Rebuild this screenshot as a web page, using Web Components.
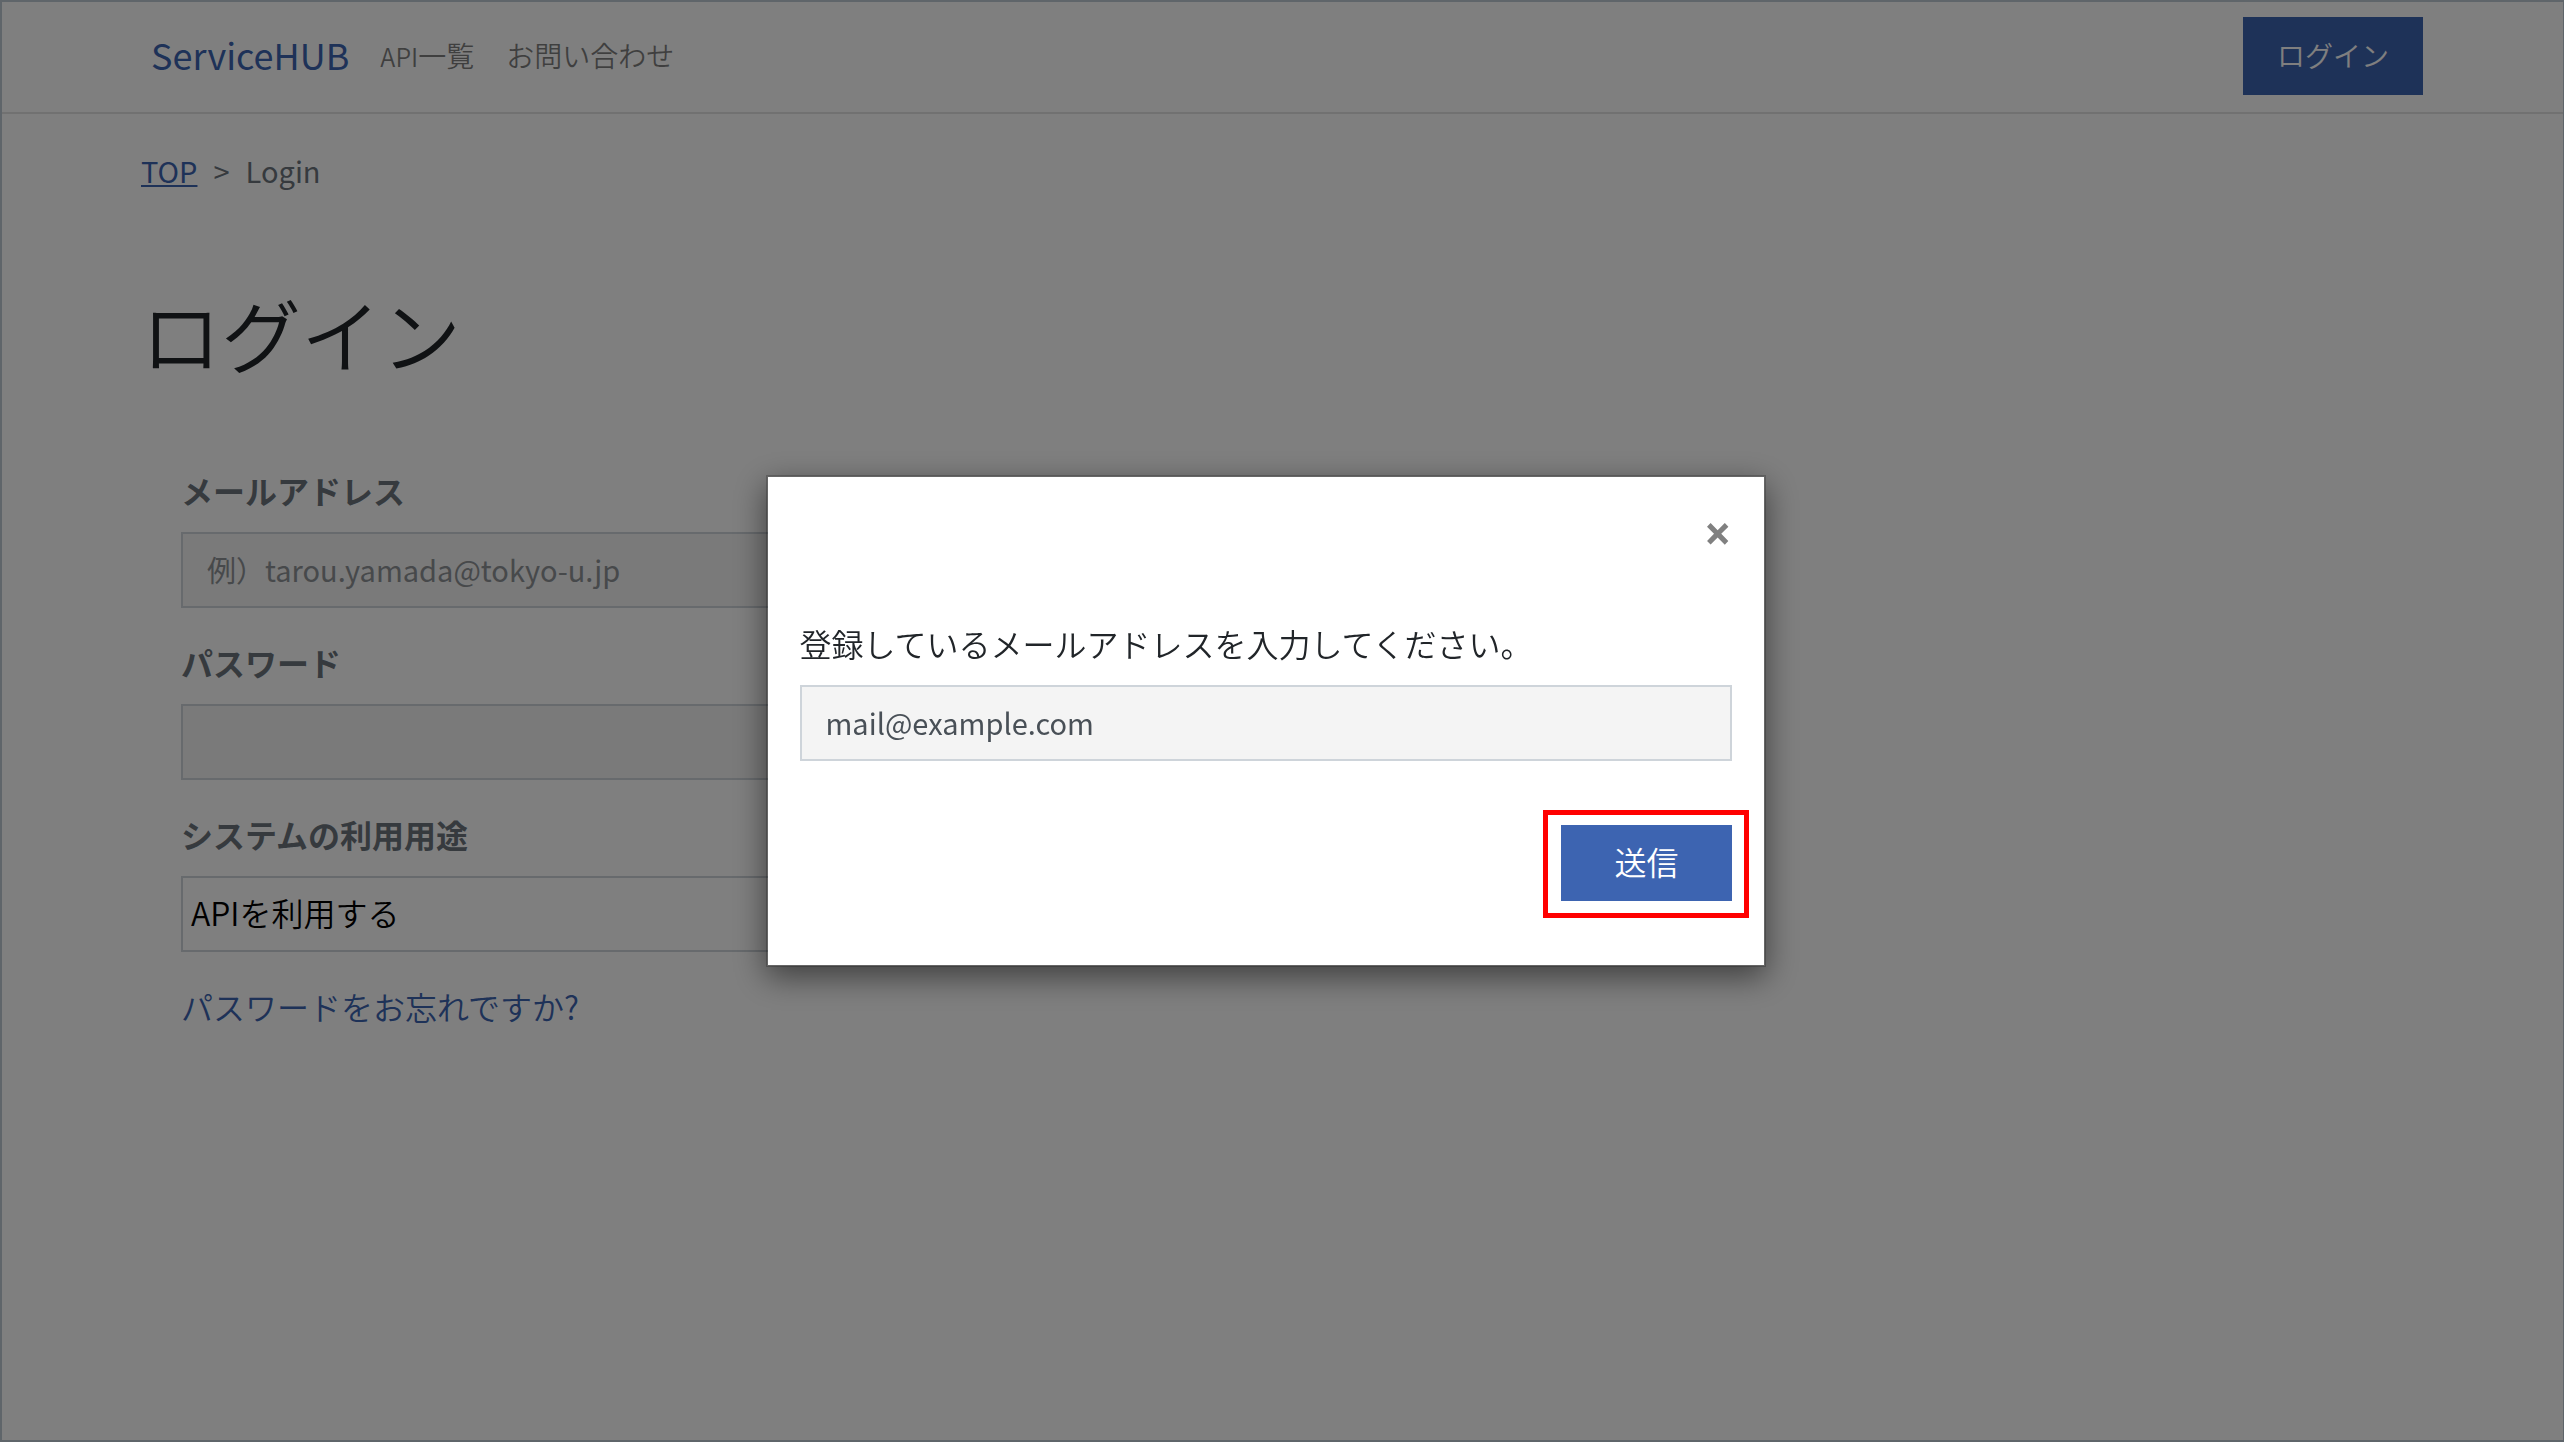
<!DOCTYPE html>
<html lang="ja">
<head>
<meta charset="utf-8">
<meta name="viewport" content="width=device-width, initial-scale=1">
<title>ServiceHUB</title>
<style>
body {
  margin: 0;
  min-height: 100vh;
  background: #fff;
  color: #212529;
  font: 32px/48px "Noto Sans CJK JP", sans-serif;
  --primary: #3d64b1;
  --muted: #6c757d;
  --line: #ced4da;
  --field: #f4f4f4;
  --thin: 350;
}
/* latin letters run large beside the kana */
.latin {
  font-size: 25px;
}
</style>
</head>
<body>
<hub-header>
  <hub-nav-link href="#apis"><span class="latin">API</span>一覧</hub-nav-link>
  <hub-nav-link href="#contact">お問い合わせ</hub-nav-link>
</hub-header>
<hub-login-view></hub-login-view>
<hub-modal>
  <hub-field label="登録しているメールアドレスを入力してください。" type="email" value="mail@example.com" plain></hub-field>
  <hub-button slot="footer" highlight>送信</hub-button>
</hub-modal>

<script>
customElements.define('hub-button', class extends HTMLElement {
  constructor() {
    super()
    this.attachShadow({mode: 'open'})
    this.shadowRoot.innerHTML = this.template
  }

  get template() {
    return `
    <style>
    :host {
      display: block;
      position: relative;
    }
    button {
      display: block;
      border: 0;
      padding: 12px 53px 16px;
      background: var(--primary);
      color: #fff;
      font: inherit;
      font-weight: var(--thin);
      cursor: pointer;
    }
    :host([small]) button {
      padding: 14px 34px 16px;
      font-size: 28px;
    }
    :host([highlight])::after {
      content: '';
      position: absolute;
      inset: -15px -17px -17px -18px;
      border: 5px solid #f00;
      pointer-events: none;
    }
    </style>
    <button type="button"><slot></slot></button>
    `
  }
})

customElements.define('hub-nav-link', class extends HTMLElement {
  constructor() {
    super()
    this.attachShadow({mode: 'open'})
    this.shadowRoot.innerHTML = `
    <style>
    :host {
      display: block;
    }
    a {
      color: rgba(0, 0, 0, .5);
      font-size: 28px;
      font-weight: var(--thin);
      text-decoration: none;
    }
    </style>
    <a href="${this.getAttribute('href')}"><slot></slot></a>
    `
  }
})

customElements.define('hub-header', class extends HTMLElement {
  constructor() {
    super()
    this.attachShadow({mode: 'open'})
    this.shadowRoot.innerHTML = this.template
  }

  get template() {
    return `
    <style>
    :host {
      display: flex;
      align-items: center;
      padding: 17px 141px 17px 151px;
      border-bottom: 2px solid #e2e2e2;
    }
    .brand {
      margin-right: 31px;
      padding-bottom: 4px;
      color: var(--primary);
      font-size: 36px;
      text-decoration: none;
    }
    nav {
      display: flex;
      flex: 1;
      gap: 32px;
      padding-bottom: 4px;
    }
    </style>
    <a class="brand" href="#top">ServiceHUB</a>
    <nav><slot></slot></nav>
    <hub-button small>ログイン</hub-button>
    `
  }
})

customElements.define('hub-field', class extends HTMLElement {
  constructor() {
    super()
    this.attachShadow({mode: 'open'})
    this.shadowRoot.innerHTML = this.template
  }

  get control() {
    const options = this.getAttribute('options')
    if (options) {
      return `<select id="control">${options.split(',').map(o => `<option>${o}</option>`).join('')}</select>`
    }
    const attr = name => this.getAttribute(name) || ''
    return `<input id="control" type="${attr('type')}" value="${attr('value')}" placeholder="${attr('placeholder')}">`
  }

  get template() {
    return `
    <style>
    :host {
      display: block;
    }
    label {
      display: block;
      margin-bottom: 18px;
      color: var(--muted);
      font-weight: 700;
    }
    :host([plain]) label {
      color: inherit;
      font-weight: var(--thin);
    }
    input, select {
      display: block;
      box-sizing: border-box;
      width: 100%;
      height: 76px;
      border: 2px solid var(--line);
      border-radius: 0;
      padding: 0 24px 2px;
      background: var(--field);
      color: #495057;
      font: inherit;
      font-size: 29px;
    }
    select {
      padding: 0 4px 4px;
      background: #fff;
      color: #000;
      font-size: 32px;
      font-weight: var(--thin);
    }
    input::placeholder {
      color: #8e9296;
    }
    </style>
    <label for="control">${this.getAttribute('label')}</label>
    ${this.control}
    `
  }
})

customElements.define('hub-login-view', class extends HTMLElement {
  constructor() {
    super()
    this.attachShadow({mode: 'open'})
    this.shadowRoot.innerHTML = this.template
  }

  get template() {
    return `
    <style>
    :host {
      display: block;
      padding: 32px 141px;
    }
    a {
      color: var(--primary);
    }
    .breadcrumb {
      display: flex;
      gap: 16px;
      color: var(--muted);
      font-size: 29px;
    }
    h1 {
      margin: 90px 0 86px;
      font-size: 80px;
      font-weight: var(--thin);
      line-height: 96px;
    }
    form {
      display: grid;
      gap: 30px;
      max-width: 50%;
      padding: 0 40px;
    }
    .forgot {
      justify-self: start;
      font-weight: var(--thin);
      text-decoration: none;
    }
    </style>
    <nav class="breadcrumb">
      <a href="#top">TOP</a>
      <span>&gt;</span>
      <span>Login</span>
    </nav>
    <h1>ログイン</h1>
    <form>
      <hub-field label="メールアドレス" type="email" placeholder="例）tarou.yamada@tokyo-u.jp"></hub-field>
      <hub-field label="パスワード" type="password"></hub-field>
      <hub-field label="システムの利用用途" options="APIを利用する"></hub-field>
      <a class="forgot" href="#forgot">パスワードをお忘れですか?</a>
    </form>
    `
  }
})

customElements.define('hub-modal', class extends HTMLElement {
  constructor() {
    super()
    this.attachShadow({mode: 'open'})
    this.shadowRoot.innerHTML = this.template
  }

  get template() {
    return `
    <style>
    :host {
      position: fixed;
      inset: 0;
      display: flex;
      align-items: center;
      justify-content: center;
      box-sizing: border-box;
      padding-right: 34px;
      border: 2px solid #5f656a;
      border-right-width: 1px;
      background: rgba(0, 0, 0, .5);
    }
    .dialog {
      box-sizing: border-box;
      width: 1000px;
      max-width: 100%;
      border: 2px solid rgba(0, 0, 0, .2);
      padding: 32px;
      background: #fff;
      background-clip: padding-box;
      box-shadow: 0 10px 30px rgba(0, 0, 0, .5);
    }
    header {
      display: flex;
      justify-content: flex-end;
      margin-bottom: 62px;
    }
    .close {
      border: 0;
      padding: 0;
      background: none;
      color: #808080;
      font: 700 48px/48px "Open Sans", sans-serif;
    }
    footer {
      display: flex;
      justify-content: flex-end;
      padding: 64px 0 32px;
    }
    </style>
    <section class="dialog" role="dialog" aria-modal="true">
      <header><button class="close" type="button" aria-label="閉じる">×</button></header>
      <slot></slot>
      <footer><slot name="footer"></slot></footer>
    </section>
    `
  }
})
</script>
</body>
</html>
